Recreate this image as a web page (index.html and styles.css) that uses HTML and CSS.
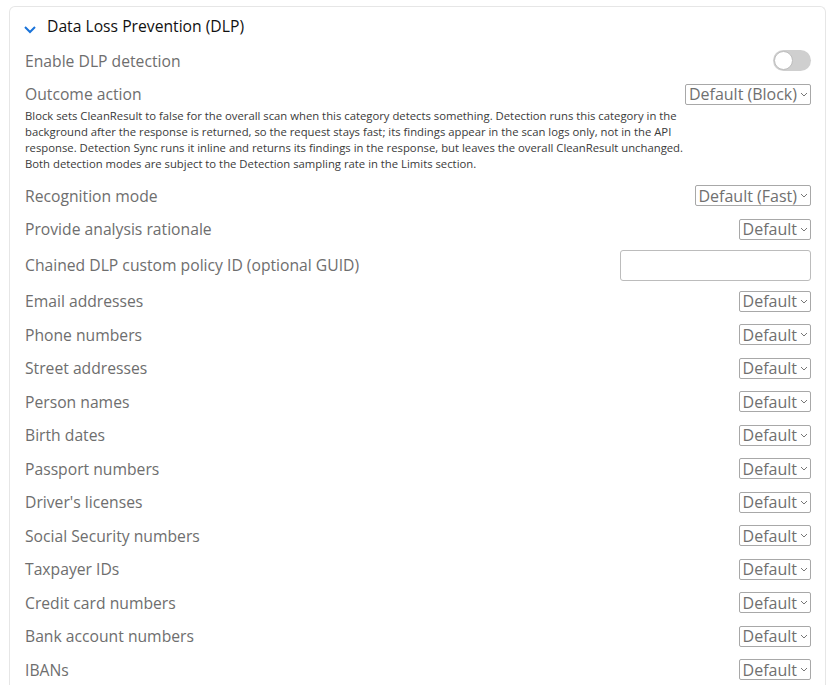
FILE: index.html
```html
<!DOCTYPE html>
<html lang="en">
  <head>
    <meta charset="UTF-8" />
    <title>DLP settings</title>
    <link rel="stylesheet" href="styles.css">
  </head>

  <body>
    <div class="page">
      <div class="panel">
        <!-- 标题 -->
        <div class="panel-head">
          <svg class="chevron" width="14" height="9" viewBox="0 0 14 9">
            <path d="M2 2 L7 7 L12 2" fill="none" stroke="#1a73d9" stroke-width="2" />
          </svg>
          <span class="title">Data Loss Prevention (DLP)</span>
        </div>

        <div class="row">
          <span class="label">Enable DLP detection</span>
          <span class="toggle"><span class="knob"></span></span>
        </div>

        <div class="row">
          <span class="label">Outcome action</span>
          <span class="select">Default (Block)<svg width="8" height="5" viewBox="0 0 8 5"><path d="M1 1 L4 4 L7 1" fill="none" stroke="#777" stroke-width="1" /></svg></span>
        </div>
        <p class="desc">Block sets CleanResult to false for the overall scan when this category detects something. Detection runs this category in the background after the response is returned, so the request stays fast; its findings appear in the scan logs only, not in the API response. Detection Sync runs it inline and returns its findings in the response, but leaves the overall CleanResult unchanged. Both detection modes are subject to the Detection sampling rate in the Limits section.</p>

        <div class="row">
          <span class="label">Recognition mode</span>
          <span class="select">Default (Fast)<svg width="8" height="5" viewBox="0 0 8 5"><path d="M1 1 L4 4 L7 1" fill="none" stroke="#777" stroke-width="1" /></svg></span>
        </div>

        <div class="row">
          <span class="label">Provide analysis rationale</span>
          <span class="select">Default<svg width="8" height="5" viewBox="0 0 8 5"><path d="M1 1 L4 4 L7 1" fill="none" stroke="#777" stroke-width="1" /></svg></span>
        </div>

        <div class="row row-tall">
          <span class="label">Chained DLP custom policy ID (optional GUID)</span>
          <input class="text" type="text" />
        </div>

        <div id="types"></div>
      </div>
    </div>

    <script>
      // 各类敏感信息
      let names = ['Email addresses', 'Phone numbers', 'Street addresses', 'Person names',
        'Birth dates', 'Passport numbers', "Driver's licenses", 'Social Security numbers',
        'Taxpayer IDs', 'Credit card numbers', 'Bank account numbers', 'IBANs']
      let box = document.getElementById('types')
      let str = ''
      names.forEach(function (n) {
        str += `<div class="row">
                  <span class="label">${n}</span>
                  <span class="select">Default<svg width="8" height="5" viewBox="0 0 8 5"><path d="M1 1 L4 4 L7 1" fill="none" stroke="#777" stroke-width="1" /></svg></span>
                </div>`
      })
      box.innerHTML = str
    </script>
  </body>
</html>
```

FILE: styles.css
```css
body {
  margin: 0;
  padding: 0;
  background-color: #fff;
  font-family: "Open Sans", "Noto Sans", sans-serif;
}

.page {
  padding: 6px 10px 0 9px;
}

.panel {
  border: 1px solid #e6e6e6;
  border-bottom: none;
  border-radius: 6px 6px 0 0;
  padding: 0 14px 0 15px;
  height: 700px;
}

.panel-head {
  display: flex;
  align-items: center;
  height: 37px;
}

.chevron {
  margin: 7px 10px 0 -2px;
}

.title {
  font-size: 15.7px;
  color: #111;
}

.row {
  display: flex;
  align-items: center;
  justify-content: space-between;
  height: 33.5px;
}

.row-tall {
  height: 38.5px;
}

.label {
  font-size: 15.7px;
  color: #6e6e6e;
}

.select {
  display: flex;
  align-items: center;
  height: 19px;
  padding: 0 2px 0 3px;
  border: 1px solid #a8a8a8;
  border-radius: 2px;
  font-size: 16px;
  color: #707070;
  background-color: #fff;
}

.select svg {
  margin-left: 3px;
}

.toggle {
  display: block;
  width: 38px;
  height: 21px;
  border-radius: 11px;
  background-color: #cfcfcf;
  position: relative;
}

.knob {
  position: absolute;
  left: 1px;
  top: 1px;
  width: 17px;
  height: 17px;
  border-radius: 50%;
  background-color: #fff;
  border: 1px solid #bdbdbd;
}

.desc {
  margin: -3px 0 7px;
  width: 685px;
  font-size: 11.3px;
  line-height: 16px;
  color: #3a3a3a;
}

.text {
  display: block;
  width: 191px;
  height: 31px;
  box-sizing: border-box;
  border: 1px solid #bcbcbc;
  border-radius: 3px;
  outline: none;
}
```
